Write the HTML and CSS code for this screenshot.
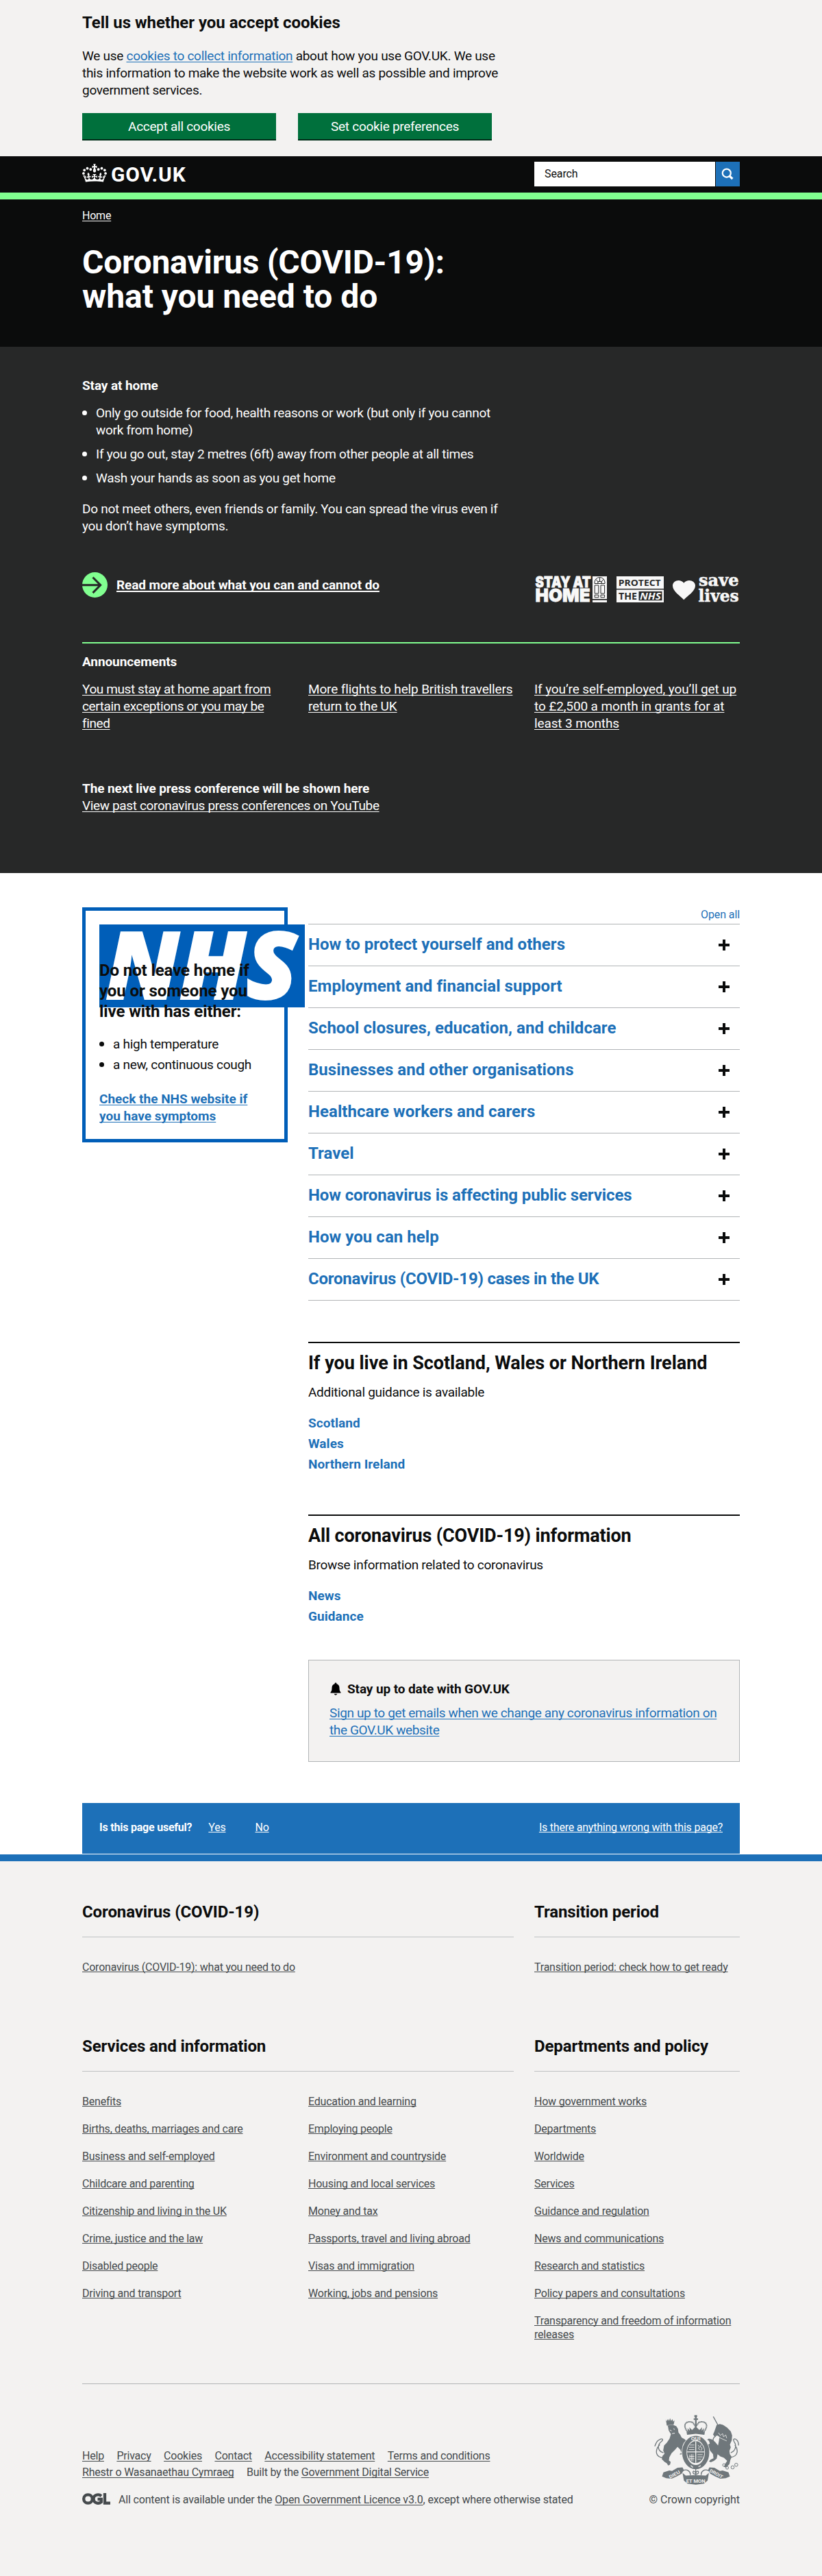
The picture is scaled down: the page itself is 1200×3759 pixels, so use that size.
FILE: index.html
```
<!DOCTYPE html>
<html lang="en">
<head>
<meta charset="utf-8">
<title>Coronavirus (COVID-19): what you need to do - GOV.UK</title>
<link rel="stylesheet" href="styles.css">
</head>
<body>

<section class="cookie-banner">
  <div class="container">
    <h2 class="heading-m">Tell us whether you accept cookies</h2>
    <p class="cookie-text two-thirds">We use <a class="link" href="#">cookies to collect information</a> about how you use GOV.UK. We use this information to make the website work as well as possible and improve government services.</p>
    <div class="cookie-buttons">
      <button class="button">Accept all cookies</button>
      <button class="button">Set cookie preferences</button>
    </div>
  </div>
</section>

<header class="site-header">
  <div class="container header-row">
    <a class="logo" href="#">
      <svg class="crown" viewBox="0 0 132 97" aria-hidden="true"><path fill="#fff" fill-rule="evenodd" d="M25 30.2c3.5 1.5 7.7-.2 9.1-3.7 1.5-3.6-.2-7.8-3.9-9.2-3.6-1.4-7.6.3-9.1 3.9-1.4 3.5.3 7.5 3.9 9zM9 39.5c3.6 1.5 7.8-.2 9.2-3.7 1.5-3.6-.2-7.8-3.9-9.1-3.6-1.5-7.6.2-9.1 3.8-1.4 3.5.3 7.5 3.8 9zM4.4 57.2c3.5 1.5 7.7-.2 9.1-3.8 1.5-3.6-.2-7.7-3.9-9.1-3.5-1.5-7.6.3-9.1 3.8-1.4 3.5.3 7.6 3.9 9.1zm38.3-21.4c3.5 1.5 7.7-.2 9.1-3.8 1.5-3.6-.2-7.7-3.9-9.1-3.6-1.5-7.6.3-9.1 3.8-1.3 3.6.4 7.7 3.9 9.1zm64.4-5.6c-3.6 1.5-7.8-.2-9.1-3.7-1.5-3.6.2-7.8 3.8-9.2 3.6-1.4 7.7.3 9.2 3.9 1.3 3.5-.4 7.5-3.9 9zm15.9 9.3c-3.6 1.5-7.7-.2-9.1-3.7-1.5-3.6.2-7.8 3.7-9.1 3.6-1.5 7.7.2 9.2 3.8 1.5 3.5-.3 7.5-3.8 9zm4.7 17.7c-3.6 1.5-7.8-.2-9.2-3.8-1.5-3.6.2-7.7 3.9-9.1 3.6-1.5 7.7.3 9.2 3.8 1.3 3.5-.4 7.6-3.9 9.1zM89.3 35.8c-3.6 1.5-7.8-.2-9.2-3.8-1.4-3.6.2-7.7 3.9-9.1 3.6-1.5 7.7.3 9.2 3.8 1.4 3.6-.3 7.7-3.9 9.1zM69.7 17.7l8.9 4.7V9.3l-8.9 2.8c-.2-.3-.5-.6-.9-.9L72.4 0H59.6l3.5 11.2c-.3.3-.6.5-.9.9l-8.8-2.8v13.1l8.8-4.7c.3.3.6.7.9.9l-5 15.4v.1c-.2.8-.4 1.6-.4 2.4 0 4.1 3.1 7.5 7 8.1h.2c.3 0 .7.1 1 .1.4 0 .7 0 1-.1h.2c4-.6 7.1-4.1 7.1-8.1 0-.8-.1-1.7-.4-2.4V34l-5.1-15.4c.4-.2.7-.6 1-.9zM66 92.8c16.9 0 32.8 1.1 47.1 3.2 4-16.9 8.9-26.7 14-33.5l-9.6-3.4c1 4.9 1.1 7.2 0 10.2-1.5-1.4-3-4.3-4.2-8.7L108.6 76c2.8-2 5-3.2 7.5-3.3-4.4 9.4-10 11.9-13.6 11.2-4.3-.8-6.3-4.6-5.6-7.9 1-4.7 5.7-5.9 8-.5 4.3-8.7-3-11.4-7.6-8.8 7.1-7.2 7.9-13.5 2.1-21.1-8 6.1-8.1 12.3-4.5 20.8-4.7-5.4-12.1-2.5-9.5 6.2 3.4-5.2 7.9-2 7.2 3.1-.6 4.3-6.4 7.8-13.5 7.2-10.3-.9-10.9-8-11.2-13.8 2.5-.5 7.1 1.8 11 7.3L80.2 60c-4.1 4.4-8 5.3-12.3 5.4 1.4-4.4 8-11.6 8-11.6H55.5s6.4 7.2 7.9 11.6c-4.2-.1-8-1-12.3-5.4l1.4 16.4c3.9-5.5 8.5-7.7 10.9-7.3-.3 5.8-.9 12.8-11.1 13.8-7.2.6-12.9-2.9-13.5-7.2-.7-5 3.8-8.3 7.1-3.1 2.7-8.7-4.6-11.6-9.4-6.2 3.7-8.5 3.6-14.7-4.6-20.8-5.8 7.6-5 13.9 2.2 21.1-4.7-2.6-11.9.1-7.7 8.8 2.3-5.5 7.1-4.2 8.1.5.7 3.3-1.3 7.1-5.7 7.9-3.5.7-9-1.8-13.5-11.2 2.5.1 4.7 1.3 7.5 3.3l-4.7-15.4c-1.2 4.4-2.7 7.2-4.3 8.7-1.1-3-.9-5.3 0-10.2l-9.5 3.4c5 6.9 9.9 16.7 14 33.5 14.8-2.1 30.8-3.2 47.7-3.2z"/></svg>
      <span class="logo-text">GOV.UK</span>
    </a>
    <form class="search">
      <span class="search-field">Search</span>
      <span class="search-button">
        <svg width="35" height="36" viewBox="0 0 35 36" aria-hidden="true"><circle cx="15.8" cy="16.6" r="6" fill="none" stroke="#fff" stroke-width="2.2"/><path d="M20 20.8l4.4 4.2" stroke="#fff" stroke-width="3.2"/></svg>
      </span>
    </form>
  </div>
</header>

<section class="hero">
  <div class="container">
    <nav class="breadcrumb"><a href="#">Home</a></nav>
    <h1>Coronavirus (COVID-19):<br><span class="h1-second">what you need to do</span></h1>
  </div>
</section>

<section class="advice">
  <div class="container">
    <h2 class="heading-s">Stay at home</h2>
    <ul class="advice-list two-thirds">
      <li>Only go outside for food, health reasons or work (but only if you cannot work from home)</li>
      <li>If you go out, stay 2 metres (6ft) away from other people at all times</li>
      <li>Wash your hands as soon as you get home</li>
    </ul>
    <p class="two-thirds">Do not meet others, even friends or family. You can spread the virus even if you don’t have symptoms.</p>
    <div class="action-row">
      <a class="action" href="#">
        <svg width="37" height="37" viewBox="0 0 37 37" aria-hidden="true"><circle cx="18.5" cy="18.5" r="18.5" fill="#81ff90"/><path d="M0 18.8h26M15.5 7.5l11.2 11.3-11.2 11.3" fill="none" stroke="#272828" stroke-width="3"/></svg>
        <span class="action-text">Read more about what you can and cannot do</span>
      </a>
      <svg class="slogans" width="300" height="38" viewBox="0 0 300 38" fill="#f8f8f8" role="img" aria-label="Stay at home, protect the NHS, save lives">
        <g class="slogan-heavy">
          <text x="1.5" y="15.8" font-size="21.5" textLength="81" lengthAdjust="spacingAndGlyphs">STAY AT</text>
          <text x="1.5" y="37.3" font-size="26" textLength="80" lengthAdjust="spacingAndGlyphs">HOME</text>
        </g>
        <path d="M85 0h21v33H85zM85 34.7h21v3.3H85z"/>
        <g fill="none" stroke="#272828" stroke-width="1"><path d="M88 10.500V9a7.500 7.500 0 0 1 15 0v1.500zM95.500 2v6M90 4.500l4 4.500M101 4.500l-4 4.500M92.500 10a3 3 0 0 1 6 0"/><path d="M88.200 13h5.600v12h-5.600zM97 13h5.600v12H97zM88.200 27.200h5.600v3.600h-5.600zM97 27.200h5.600v3.600H97z"/></g>
        <path d="M120 0h69v18.100h-69zM120 19.400h69V38h-69z"/>
        <path fill="#272828" d="M152.500 22h34v13.200h-34z"/>
        <g class="slogan-mid">
          <text x="122.700" y="14" font-size="12.800" fill="#272828" textLength="62" lengthAdjust="spacingAndGlyphs">PROTECT</text>
          <text x="123" y="33.800" font-size="13.500" fill="#272828" textLength="27" lengthAdjust="spacingAndGlyphs">THE</text>
          <text x="154" y="33.800" font-size="14" font-style="italic" textLength="31" lengthAdjust="spacingAndGlyphs">NHS</text>
        </g>
        <path d="M218.300 34.200C213 28.500 202 22 202 13.800c0-8 11-10.800 16.300-4.100C223.600 3 235 5.800 235 13.800c0 8.200-11.400 14.700-16.700 20.400z"/>
        <g class="slogan-serif">
          <text x="240" y="14.300" font-size="25" textLength="58.500" lengthAdjust="spacingAndGlyphs">save</text>
          <text x="239.500" y="37.300" font-size="25" textLength="59" lengthAdjust="spacingAndGlyphs">lives</text>
        </g>
      </svg>
    </div>
    <div class="announcements">
      <h2 class="heading-s">Announcements</h2>
      <div class="thirds">
        <a href="#">You must stay at home apart from certain exceptions or you may be fined</a>
        <a href="#">More flights to help British travellers return to the UK</a>
        <a href="#">If you’re self-employed, you’ll get up to £2,500 a month in grants for at least 3 months</a>
      </div>
    </div>
    <div class="press">
      <h2 class="heading-s">The next live press conference will be shown here</h2>
      <a href="#">View past coronavirus press conferences on YouTube</a>
    </div>
  </div>
</section>

<main class="container main">
  <aside class="nhs-box">
    <svg class="nhs-logo" width="300" height="121" viewBox="0 0 300 121" role="img" aria-label="NHS"><path fill="#005eb8" d="M0 0h300v121H0z"/><text x="9" y="108.500" font-size="137" fill="#fff" stroke="#fff" stroke-width="2" textLength="280" lengthAdjust="spacingAndGlyphs">NHS</text></svg>
    <h2 class="nhs-title">Do not leave home if you or someone you live with has either:</h2>
    <ul class="nhs-list">
      <li>a high temperature</li>
      <li>a new, continuous cough</li>
    </ul>
    <a class="link nhs-link" href="#">Check the NHS website if you have symptoms</a>
  </aside>

  <div class="content">
    <div class="accordion">
      <a class="open-all" href="#">Open all</a>
      <div class="accordion-item"><h3>How to protect yourself and others</h3><i class="plus"></i></div>
      <div class="accordion-item"><h3>Employment and financial support</h3><i class="plus"></i></div>
      <div class="accordion-item"><h3>School closures, education, and childcare</h3><i class="plus"></i></div>
      <div class="accordion-item"><h3>Businesses and other organisations</h3><i class="plus"></i></div>
      <div class="accordion-item"><h3>Healthcare workers and carers</h3><i class="plus"></i></div>
      <div class="accordion-item"><h3>Travel</h3><i class="plus"></i></div>
      <div class="accordion-item"><h3 class="tight">How coronavirus is affecting public services</h3><i class="plus"></i></div>
      <div class="accordion-item"><h3>How you can help</h3><i class="plus"></i></div>
      <div class="accordion-item"><h3 class="tighter">Coronavirus (COVID-19) cases in the UK</h3><i class="plus"></i></div>
    </div>

    <section class="topic">
      <h2>If you live in Scotland, Wales or Northern Ireland</h2>
      <p>Additional guidance is available</p>
      <ul class="topic-links">
        <li><a href="#">Scotland</a></li>
        <li><a href="#">Wales</a></li>
        <li><a href="#">Northern Ireland</a></li>
      </ul>
    </section>

    <section class="topic">
      <h2 class="tight">All coronavirus (COVID-19) information</h2>
      <p>Browse information related to coronavirus</p>
      <ul class="topic-links">
        <li><a href="#">News</a></li>
        <li><a href="#">Guidance</a></li>
      </ul>
    </section>

    <section class="signup">
      <h2 class="heading-s signup-title">
        <svg width="16" height="19" viewBox="0 0 16 19" aria-hidden="true"><path d="M8 .5c1 0 1.500.7 1.500 1.700 2.600.7 4 2.700 4 5.800 0 3.700.5 5 2 6.500v1H.500v-1c1.500-1.500 2-2.800 2-6.500 0-3.100 1.400-5.100 4-5.800C6.500 1.200 7 .5 8 .5zM5.800 16.700h4.400c-.3 1.200-1.100 1.800-2.200 1.800s-1.900-.6-2.200-1.800z"/></svg>
        Stay up to date with GOV.UK
      </h2>
      <a class="link signup-link" href="#">Sign up to get emails when we change any coronavirus information on the GOV.UK website</a>
    </section>
  </div>
</main>

<div class="container">
  <div class="feedback">
    <div class="feedback-left"><b>Is this page useful?</b><a href="#">Yes</a><a href="#">No</a></div>
    <a href="#">Is there anything wrong with this page?</a>
  </div>
</div>

<footer class="footer">
  <div class="container">
    <div class="footer-grid">
      <section>
        <h2>Coronavirus (COVID-19)</h2>
        <ul><li><a href="#">Coronavirus (COVID-19): what you need to do</a></li></ul>
      </section>
      <section>
        <h2>Transition period</h2>
        <ul><li><a href="#">Transition period: check how to get ready</a></li></ul>
      </section>
      <section>
        <h2>Services and information</h2>
        <ul class="two-columns">
          <li><a href="#">Benefits</a></li>
          <li><a href="#">Births, deaths, marriages and care</a></li>
          <li><a href="#">Business and self-employed</a></li>
          <li><a href="#">Childcare and parenting</a></li>
          <li><a href="#">Citizenship and living in the UK</a></li>
          <li><a href="#">Crime, justice and the law</a></li>
          <li><a href="#">Disabled people</a></li>
          <li><a href="#">Driving and transport</a></li>
          <li><a href="#">Education and learning</a></li>
          <li><a href="#">Employing people</a></li>
          <li><a href="#">Environment and countryside</a></li>
          <li><a href="#">Housing and local services</a></li>
          <li><a href="#">Money and tax</a></li>
          <li><a href="#">Passports, travel and living abroad</a></li>
          <li><a href="#">Visas and immigration</a></li>
          <li><a href="#">Working, jobs and pensions</a></li>
        </ul>
      </section>
      <section>
        <h2>Departments and policy</h2>
        <ul>
          <li><a href="#">How government works</a></li>
          <li><a href="#">Departments</a></li>
          <li><a href="#">Worldwide</a></li>
          <li><a href="#">Services</a></li>
          <li><a href="#">Guidance and regulation</a></li>
          <li><a href="#">News and communications</a></li>
          <li><a href="#">Research and statistics</a></li>
          <li><a href="#">Policy papers and consultations</a></li>
          <li><a href="#">Transparency and freedom of information releases</a></li>
        </ul>
      </section>
    </div>

    <div class="meta">
      <div class="meta-left">
        <div class="meta-links"><a href="#">Help</a><a href="#">Privacy</a><a href="#">Cookies</a><a href="#">Contact</a><a href="#">Accessibility statement</a><a href="#">Terms and conditions</a></div>
        <div class="meta-links"><a href="#">Rhestr o Wasanaethau Cymraeg</a><span>Built by the <a href="#">Government Digital Service</a></span></div>
        <div class="licence">
          <svg width="41" height="17" viewBox="0 0 41 17" role="img" aria-label="Open Government Licence"><g fill="none" stroke="#454a4d" stroke-width="4.300"><ellipse cx="8.500" cy="8.500" rx="6.300" ry="6.200"/><path d="M28 4.300C24 .700 16.500 2.500 16.500 8.500s7 8 11.300 4.500V8.800H22.500M33 0v14.700h8"/></g></svg>
          <span>All content is available under the <a href="#">Open Government Licence v3.0</a>, except where otherwise stated</span>
        </div>
      </div>
      <div class="copyright">
        <svg width="125" height="103" viewBox="30 15 375 310" aria-hidden="true">
          <g fill="#6f777b" stroke="none">
            <path d="M80 37l4 9 6-10 5 8 4-12 5 12 6-8 3 11 6-6-4 20-30 2z"/>
            <path d="M84 65l28-3 14 5 8 12 2 16 8 10 6 12 14 8 8 9-12 6-6 14 6 18 2 16-14 4-8-2 10-6-6-14-12-12-10 12-16 16-10 18-2 14 8 6-3 12-8 4-6-10-10-6-12-12 3-14 9-10-6-14 4-22 12-12 12-18 6-20-10-16-3-18-7-6 4-8z"/>
            <path d="M304 62l14-4 14 4 18 12 16 16 6 18-2 22-8 18 4 12-6 16 2 14 8 12-6 14-4 18-14 14-10-2 6-14 8-12-14-14-16-6-12-10-4 20-12 10-14 6-8-4 8-8 12-6-2-18-12-14-6-12-18 4-8-6 16-10 14-8-4-12-8-6 8-4 16 4 12 12 12 14 4-20 2-18-8-6-14 4-6-8 6-14z"/>
            <path d="M70 270l26-8 12 2 24-14 22-2 6 12-10 16-22 12-22 10-24-2-18-8zM356 270l-26-8-12 2-24-14-22-2-6 12 10 16 22 12 22 10 24-2 18-8zM154 272l14 12 44-2 44 2 14-12-6 34-16 14-36 4-36-4-16-14z"/>
            <path d="M172 93l40-5 40 5-2 12-38-4-38 4zM176 76l10 11-2-15 12 12 16-16 16 16 12-12-2 15 10-11-2 17-34-4-34 4zM209 27h7v42h-7zM203 33h19v7h-19zM206 19h12v9h-12z"/>
          </g>
          <g fill="none" stroke="#6f777b">
            <path d="M289 25l21 38" stroke-width="4"/>
            <path d="M176 92c-24-30-8-50 22-42l14 20 14-20c30-8 46 12 22 42" stroke-width="6" stroke-dasharray="5 1.500"/>
            <path d="M70 184c-30-10-26-36-8-50 10-10 2-14-8-8-12 4-16 14-22 30M74 206c-42 0-42-34-20-58M366 184c24-10 26-34 14-50-6-12 4-14 12-6 8 6 8 14 8 24M362 204c38-2 38-34 22-54" stroke-width="4"/>
            <circle cx="336" cy="238" r="6" stroke-width="3"/><circle cx="350" cy="250" r="6" stroke-width="3"/><circle cx="374" cy="248" r="7" stroke-width="3"/><circle cx="390" cy="237" r="7" stroke-width="3"/><path d="M300 112c-14 4-16 24-4 32s4 20-10 20M352 190v24" stroke-width="4"/>
          </g>
          <ellipse cx="212" cy="183" rx="62" ry="76" fill="#f3f2f1"/>
          <ellipse cx="212" cy="183" rx="50" ry="64" fill="none" stroke="#6f777b" stroke-width="19"/>
          <ellipse cx="212" cy="181" rx="38" ry="48" fill="#6f777b"/>
          <g fill="none" stroke="#f3f2f1" stroke-width="3">
            <path d="M212 134v94M174 180h76" stroke-width="4"/>
            <path d="M186 150h20M182 160h24M182 170h24M222 150l6 8-4 8 8 6M236 148l-4 10 8 6-4 10M186 192v24M193 190v30M200 190v32M184 200h22M184 210h22M220 192h22M220 202h22M220 212h16" stroke-width="2.500"/>
            <path d="M312 96l8 12 10-8 4 14 10-8 4 14M304 112l44 20" stroke-width="2.500"/>
            <path d="M98 84l8 4M114 78l6 4M108 100l12-2" stroke-width="3"/>
            <path d="M190 240l10 8M224 246l10-6" stroke-width="4"/>
          </g>
          <path d="M156 262c18-8 34 4 32 20M268 262c-18-8-34 4-32 20M212 254v38M200 270c0-10 12-4 12 6 0-10 12-16 12-6 0 8-12 8-12 8s-12 0-12-8z" fill="none" stroke="#6f777b" stroke-width="4"/>
          <g class="crest-text" fill="#f3f2f1">
            <text x="170" y="317" textLength="84" lengthAdjust="spacingAndGlyphs" font-size="22">ET MON</text>
            <text transform="translate(99 298) rotate(-29)" textLength="52" lengthAdjust="spacingAndGlyphs" font-size="20">DIEU</text>
            <text transform="translate(271 267) rotate(29)" textLength="64" lengthAdjust="spacingAndGlyphs" font-size="20">DROIT</text>
            <text transform="translate(191 130)" textLength="42" lengthAdjust="spacingAndGlyphs" font-size="19">QUI</text>
          </g>
        </svg>
        <span>© Crown copyright</span>
      </div>
    </div>
  </div>
</footer>
</body>
</html>
```
FILE: styles.css
```
* { box-sizing: border-box; }

body {
  margin: 0;
  background: #fff;
  color: #0b0c0c;
  font: 400 19px/25px Roboto, "Liberation Sans", sans-serif;
  letter-spacing: -0.28px;
}

h1, h2, h3, p, ul { margin: 0; padding: 0; }
ul { list-style: none; }
svg { display: block; }

a {
  color: inherit;
  text-decoration: underline;
  text-decoration-thickness: 1px;
  text-underline-offset: 2px;
  text-decoration-skip-ink: none;
}

.link { color: #1d70b8; }
.container { width: 960px; margin: 0 auto; }
.two-thirds { width: 630px; }

.heading-m { font-size: 24px; line-height: 30px; letter-spacing: -0.03px; }
.heading-s { font-size: 19px; line-height: 25px; letter-spacing: -0.1px; }

/* Cookie banner */
.cookie-banner { height: 228px; padding-top: 18px; background: #f3f2f1; }
.cookie-text { margin-top: 21px; }
.cookie-buttons { display: flex; gap: 32px; margin-top: 21px; }
.button {
  width: 283px;
  height: 38px;
  padding: 0;
  border: 0;
  background: #00703c;
  box-shadow: 0 2px 0 #002d18;
  color: #fff;
  font: inherit;
  letter-spacing: -0.28px;
}

/* Header */
.site-header { height: 63px; border-bottom: 10px solid #81ff90; background: #0b0c0c; }
.header-row { display: flex; justify-content: space-between; padding-top: 8px; }
.logo { display: flex; gap: 6px; padding-top: 3px; color: #fff; text-decoration: none; }
.crown { width: 36px; height: 27px; }
.logo-text { font-size: 30px; font-weight: 700; line-height: 31px; letter-spacing: 0.8px; }
.search { display: flex; gap: 1px; }
.search-field {
  width: 264px;
  height: 36px;
  padding-left: 15px;
  background: #fff;
  font-size: 16px;
  line-height: 35px;
  letter-spacing: -0.1px;
}
.search-button { width: 35px; height: 36px; background: #1d70b8; }

/* Title */
.hero { height: 215px; padding-top: 14px; background: #0b0c0c; color: #fff; }
.breadcrumb { font-size: 16px; line-height: 20px; letter-spacing: -0.22px; }
h1 { margin-top: 33px; font-size: 48px; line-height: 50px; letter-spacing: -0.25px; }
.h1-second { letter-spacing: -0.05px; }

/* Advice */
.advice { height: 768px; padding-top: 44px; background: #272828; color: #fff; }
.advice-list { display: grid; gap: 10px; margin: 15px 0 20px; padding-left: 20px; }
.advice-list li::before, .nhs-list li::before {
  content: "";
  float: left;
  width: 7px;
  height: 7px;
  margin: 9px 0 0 -20px;
  border-radius: 50%;
  background: currentColor;
}
.action-row { display: flex; justify-content: space-between; margin-top: 55px; }
.action { display: flex; gap: 13px; font-weight: 700; letter-spacing: -0.1px; text-decoration: none; }
.action-text { padding-top: 6px; text-decoration: underline; text-decoration-thickness: 1.500px; text-underline-offset: 2px; }
.slogans { margin-top: 6px; overflow: visible; }
.slogan-heavy { font-family: Inter, sans-serif; font-weight: 900; letter-spacing: 0; stroke: #f8f8f8; stroke-width: 0.800px; }
.slogan-mid { font-family: "Open Sans", sans-serif; font-weight: 700; letter-spacing: 0; }
.slogan-serif { font-family: "DejaVu Serif", serif; font-weight: 700; letter-spacing: 0; stroke: #f8f8f8; stroke-width: 0.600px; }
.announcements { margin-top: 58px; padding-top: 14px; border-top: 2px solid #81ff90; }
.thirds { display: grid; grid-template-columns: repeat(3, 300px); gap: 30px; margin-top: 15px; }
.thirds a:first-child { letter-spacing: -0.4px; }
.thirds a:nth-child(2) { letter-spacing: -0.15px; }
.thirds a:last-child { letter-spacing: -0.12px; }
.press { margin-top: 70px; letter-spacing: -0.36px; }

/* Main */
.main { display: flex; align-items: flex-start; gap: 30px; padding: 50px 0 60px; }
.nhs-box {
  position: relative;
  width: 300px;
  height: 343px;
  padding: 72px 20px 0;
  border: 5px solid #005eb8;
}
.nhs-logo {
  position: absolute;
  top: 20px;
  left: 20px;
  font-family: "Open Sans", sans-serif;
  font-weight: 800;
  font-style: italic;
  letter-spacing: 0;
}
.nhs-title { position: relative; font-size: 24px; line-height: 30px; letter-spacing: -0.1px; }
.nhs-list { display: grid; gap: 5px; margin: 20px 0 25px; padding-left: 20px; }
.nhs-link { display: block; width: 230px; font-weight: 700; letter-spacing: 0; }

.content { width: 630px; }
.open-all {
  display: block;
  padding: 1px 0 3px;
  color: #1d70b8;
  font-size: 16px;
  line-height: 20px;
  letter-spacing: -0.1px;
  text-align: right;
  text-decoration: none;
}
.accordion { border-bottom: 1px solid #b1b4b6; }
.accordion-item {
  display: flex;
  justify-content: space-between;
  height: 61px;
  padding: 14px 15px 0 0;
  border-top: 1px solid #b1b4b6;
}
.accordion-item h3 { color: #1d70b8; font-size: 24px; line-height: 30px; letter-spacing: 0.05px; }
.accordion-item .tight { letter-spacing: -0.1px; }
.accordion-item .tighter { letter-spacing: -0.22px; }
.plus {
  width: 16px;
  height: 16px;
  margin-top: 8px;
  background:
    linear-gradient(#0b0c0c, #0b0c0c) center / 16px 4px no-repeat,
    linear-gradient(#0b0c0c, #0b0c0c) center / 4px 16px no-repeat;
}

.topic { margin-top: 60px; padding-top: 14px; border-top: 2px solid #0b0c0c; }
.topic + .topic { margin-top: 61px; }
.topic h2 { font-size: 27px; line-height: 30px; letter-spacing: -0.04px; }
.topic .tight { letter-spacing: -0.14px; }
.topic p { margin: 15px 0 20px; }
.topic-links { display: grid; gap: 5px; color: #1d70b8; font-weight: 700; letter-spacing: 0.05px; }
.topic-links a { text-decoration: none; }

.signup {
  height: 149px;
  margin-top: 51px;
  padding: 29px 20px 0 30px;
  border: 1px solid #b1b4b6;
  background: #f3f2f1;
}
.signup-title { display: flex; align-items: center; gap: 9px; margin-bottom: 10px; }
.signup-title svg { margin-left: 1px; }
.signup-link { letter-spacing: -0.37px; }

/* Feedback */
.feedback {
  display: flex;
  justify-content: space-between;
  height: 74px;
  margin-bottom: 1px;
  padding: 26px 25px 0;
  background: #1d70b8;
  color: #fff;
  font-size: 16px;
  line-height: 20px;
  letter-spacing: -0.22px;
}
.feedback a { text-underline-offset: 1px; }
.feedback-left b { margin-right: 24px; }
.feedback-left a + a { margin-left: 43px; }

/* Footer */
.footer {
  height: 1053px;
  padding-top: 59px;
  border-top: 10px solid #1d70b8;
  background: #f3f2f1;
  color: #454a4d;
  font-size: 16px;
  line-height: 20px;
  letter-spacing: -0.22px;
}
.footer a { text-underline-offset: 1px; }
.footer-grid { display: grid; grid-template-columns: 630px 300px; gap: 90px 30px; }
.footer-grid h2 {
  margin-bottom: 34px;
  padding-bottom: 21px;
  border-bottom: 1px solid #bfc1c3;
  color: #0b0c0c;
  font-size: 24px;
  line-height: 30px;
  letter-spacing: -0.1px;
}
.footer-grid ul { display: grid; row-gap: 20px; }
.footer-grid .two-columns { grid-template: repeat(8, 20px) / 300px 300px; grid-auto-flow: column; column-gap: 30px; }

.meta {
  display: flex;
  justify-content: space-between;
  margin-top: 61px;
  padding-top: 44px;
  border-top: 1px solid #b1b4b6;
}
.meta-left { padding-top: 51px; letter-spacing: -0.17px; }
.meta-left a { text-underline-offset: 2px; }
.meta-links { display: flex; gap: 18.500px; margin-bottom: 4px; letter-spacing: -0.22px; }
.licence { display: flex; gap: 12px; padding-top: 16px; }
.copyright { display: flex; flex-direction: column; align-items: flex-end; gap: 12px; letter-spacing: 0; }
.crest-text { font-family: Roboto, sans-serif; font-weight: 700; letter-spacing: 0; }
```
